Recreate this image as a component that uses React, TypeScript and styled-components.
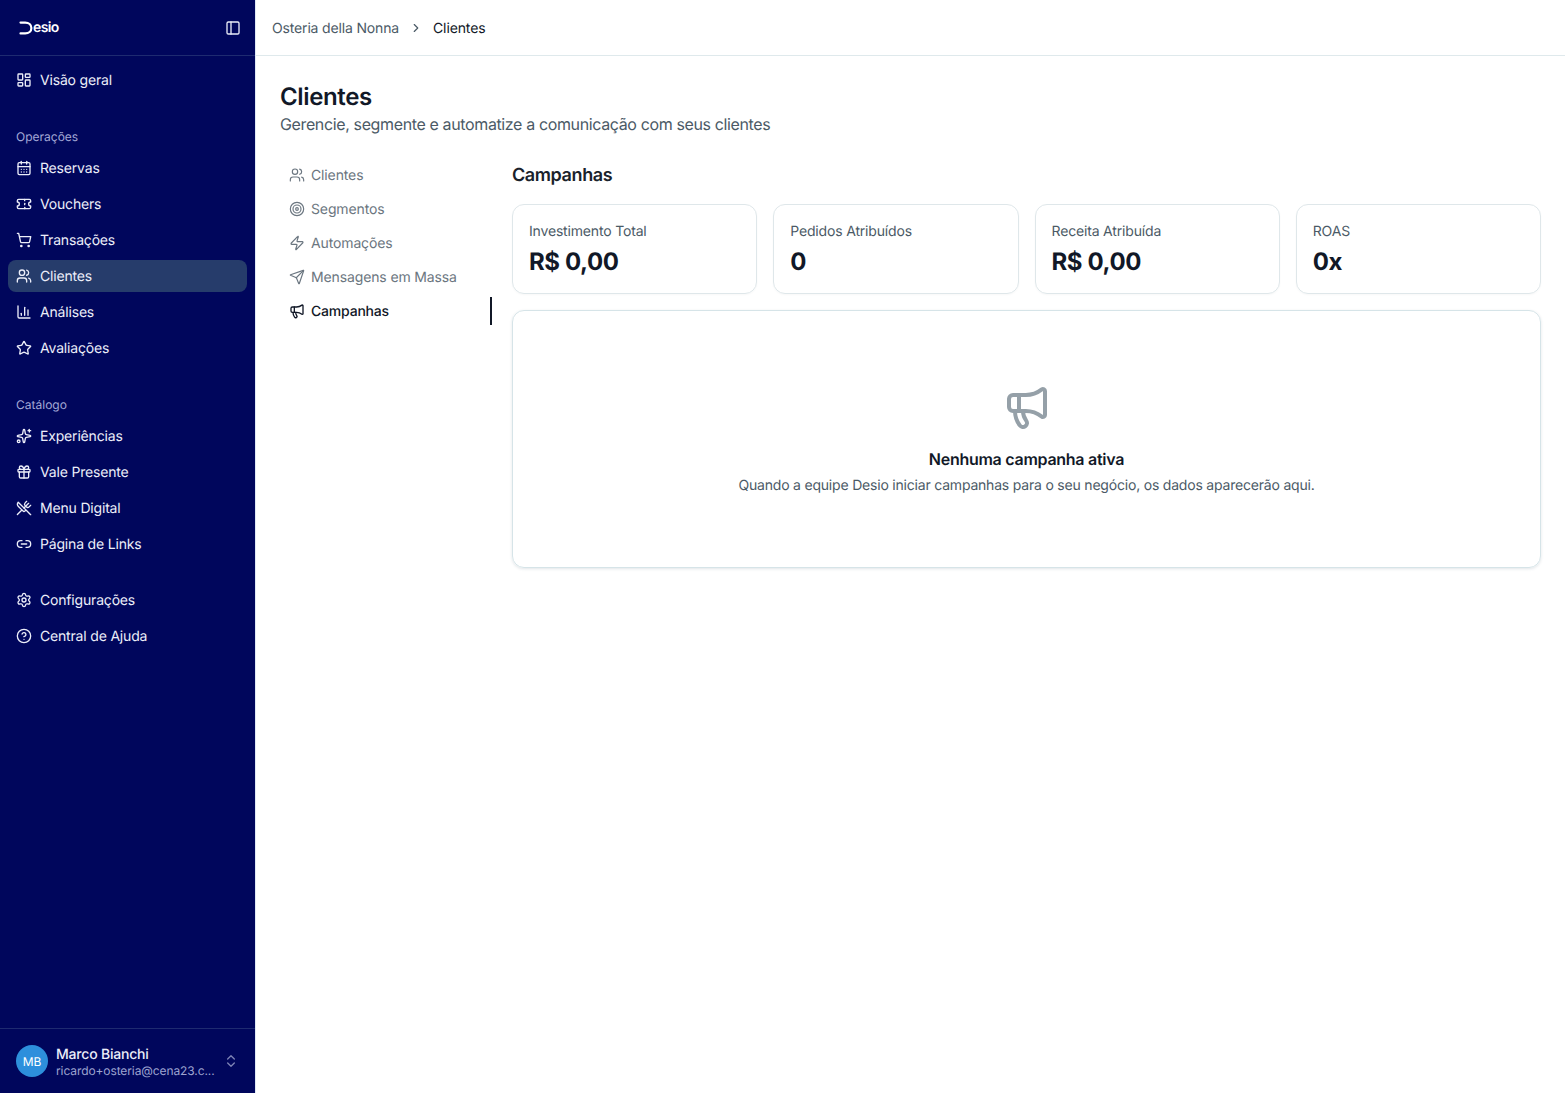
import React from 'react';
import styled, {createGlobalStyle} from 'styled-components';
import {
    CalendarDays, ChartColumn, ChevronRight, ChevronsUpDown, CircleHelp, Gift, LayoutDashboard, Link2,
    Megaphone, PanelLeft, Send, Settings, ShoppingCart, Sparkles, Star, Target, Ticket, Users,
    UtensilsCrossed, Zap,
} from 'lucide-react';

const GlobalStyle = createGlobalStyle`
    * {
        box-sizing: border-box;
    }

    html, body {
        margin: 0;
        height: 100%;
        background: #fff;
        font-family: Inter, "Liberation Sans", sans-serif;
        text-rendering: geometricPrecision;
        color: #111827;
    }
`

const operations = [
    {icon: CalendarDays, label: 'Reservas'},
    {icon: Ticket, label: 'Vouchers'},
    {icon: ShoppingCart, label: 'Transações'},
    {icon: Users, label: 'Clientes', active: true},
    {icon: ChartColumn, label: 'Análises'},
    {icon: Star, label: 'Avaliações'},
];

const catalog = [
    {icon: Sparkles, label: 'Experiências'},
    {icon: Gift, label: 'Vale Presente'},
    {icon: UtensilsCrossed, label: 'Menu Digital'},
    {icon: Link2, label: 'Página de Links'},
];

const support = [
    {icon: Settings, label: 'Configurações'},
    {icon: CircleHelp, label: 'Central de Ajuda'},
];

const tabs = [
    {icon: Users, label: 'Clientes'},
    {icon: Target, label: 'Segmentos'},
    {icon: Zap, label: 'Automações'},
    {icon: Send, label: 'Mensagens em Massa'},
    {icon: Megaphone, label: 'Campanhas', active: true},
];

const stats = [
    {label: 'Investimento Total', value: 'R$ 0,00'},
    {label: 'Pedidos Atribuídos', value: '0'},
    {label: 'Receita Atribuída', value: 'R$ 0,00'},
    {label: 'ROAS', value: '0x'},
];

type NavEntry = { icon: React.ElementType, label: string, active?: boolean };

const NavList = ({items}: { items: NavEntry[] }) => (
    <NavGroup>
        {items.map(({icon: Icon, label, active}) => (
            <NavItem key={label} $active={active}>
                <Icon size={16} strokeWidth={2}/>
                {label}
            </NavItem>
        ))}
    </NavGroup>
);

export default function App() {
    return (
        <Page>
            <GlobalStyle/>
            <Sidebar>
                <SidebarHeader>
                    <Logo>
                        <svg width="14" height="14" viewBox="0 0 14 14" fill="none">
                            <path d="M1.5 1.6H6.2C9.8 1.6 12.4 3.8 12.4 7C12.4 10.2 9.8 12.4 6.2 12.4H1.5" stroke="#fff" strokeWidth="2.2" strokeLinecap="round"/>
                        </svg>
                        <LogoText>esio</LogoText>
                    </Logo>
                    <PanelLeft size={16} color="#e8ebf7" strokeWidth={2}/>
                </SidebarHeader>
                <SidebarBody>
                    <NavList items={[{icon: LayoutDashboard, label: 'Visão geral'}]}/>
                    <Section>
                        <SectionLabel>Operações</SectionLabel>
                        <NavList items={operations}/>
                    </Section>
                    <Section>
                        <SectionLabel>Catálogo</SectionLabel>
                        <NavList items={catalog}/>
                    </Section>
                    <Section>
                        <NavList items={support}/>
                    </Section>
                </SidebarBody>
                <UserRow>
                    <Avatar>MB</Avatar>
                    <UserInfo>
                        <UserName>Marco Bianchi</UserName>
                        <UserEmail>ricardo+osteria@cena23.c...</UserEmail>
                    </UserInfo>
                    <ChevronsUpDown size={16} color="#7d83b5" strokeWidth={2}/>
                </UserRow>
            </Sidebar>
            <Main>
                <TopBar>
                    <Crumb>Osteria della Nonna</Crumb>
                    <ChevronRight size={14} color="#4b5a66" strokeWidth={2}/>
                    <CurrentCrumb>Clientes</CurrentCrumb>
                </TopBar>
                <Content>
                    <PageTitle>Clientes</PageTitle>
                    <PageSubtitle>Gerencie, segmente e automatize a comunicação com seus clientes</PageSubtitle>
                    <Columns>
                        <TabList>
                            {tabs.map(({icon: Icon, label, active}) => (
                                <Tab key={label} $active={active}>
                                    <Icon size={16} strokeWidth={active ? 2 : 1.75}/>
                                    {label}
                                </Tab>
                            ))}
                        </TabList>
                        <Panel>
                            <PanelTitle>Campanhas</PanelTitle>
                            <StatGrid>
                                {stats.map(stat => (
                                    <StatCard key={stat.label}>
                                        <StatLabel>{stat.label}</StatLabel>
                                        <StatValue>{stat.value}</StatValue>
                                    </StatCard>
                                ))}
                            </StatGrid>
                            <EmptyCard>
                                <Megaphone size={48} color="#95a0a8" strokeWidth={2}/>
                                <EmptyTitle>Nenhuma campanha ativa</EmptyTitle>
                                <EmptyText>Quando a equipe Desio iniciar campanhas para o seu negócio, os dados aparecerão aqui.</EmptyText>
                            </EmptyCard>
                        </Panel>
                    </Columns>
                </Content>
            </Main>
        </Page>
    );
}

const Page = styled.div`
    display: flex;
    height: 1093px;
    overflow: hidden;
`

const Sidebar = styled.aside`
    width: 256px;
    flex-shrink: 0;
    display: flex;
    flex-direction: column;
    background: #00065c;
    border-right: 1px solid #dfe9f5;
    color: #eceef9;
`

const SidebarHeader = styled.div`
    height: 56px;
    flex-shrink: 0;
    display: flex;
    align-items: center;
    justify-content: space-between;
    padding: 0 14px 0 19px;
    border-bottom: 1px solid #1e2a70;
`

const Logo = styled.div`
    display: flex;
    align-items: center;
`

const LogoText = styled.span`
    font-size: 14px;
    font-weight: 600;
    letter-spacing: -0.6px;
    color: #fff;
`

const SidebarBody = styled.div`
    flex: 1;
    padding: 8px 8px 0;
`

const NavGroup = styled.nav`
    display: flex;
    flex-direction: column;
    gap: 4px;
`

const NavItem = styled.a<{ $active?: boolean }>`
    height: 32px;
    display: flex;
    align-items: center;
    gap: 8px;
    padding: 0 8px;
    border-radius: 8px;
    font-size: 14px;
    letter-spacing: -0.18px;
    color: #eceef9;
    background: ${props => props.$active ? '#263c6b' : 'transparent'};
`

const Section = styled.section`
    margin-top: 24px;
`

const SectionLabel = styled.div`
    height: 32px;
    display: flex;
    align-items: center;
    padding: 0 8px;
    font-size: 12px;
    color: #a3a8d6;
`

const UserRow = styled.div`
    height: 65px;
    flex-shrink: 0;
    display: flex;
    align-items: center;
    gap: 8px;
    padding: 0 16px;
    border-top: 1px solid #1e2a70;
`

const Avatar = styled.div`
    width: 32px;
    height: 32px;
    flex-shrink: 0;
    border-radius: 50%;
    background: #2d8fdc;
    color: #fff;
    display: flex;
    align-items: center;
    justify-content: center;
    font-size: 12px;
`

const UserInfo = styled.div`
    flex: 1;
    min-width: 0;
    display: flex;
    flex-direction: column;
    padding-top: 1px;
`

const UserName = styled.div`
    font-size: 14px;
    line-height: 19px;
    font-weight: 500;
    letter-spacing: -0.2px;
    color: #eceef9;
`

const UserEmail = styled.div`
    font-size: 12px;
    line-height: 14px;
    letter-spacing: -0.1px;
    color: #9da3d0;
    white-space: nowrap;
`

const Main = styled.main`
    flex: 1;
    min-width: 0;
`

const TopBar = styled.header`
    height: 56px;
    display: flex;
    align-items: center;
    gap: 10px;
    padding: 1px 16px 0;
    border-bottom: 1px solid #dfe9ec;
`

const Crumb = styled.span`
    font-size: 14px;
    letter-spacing: -0.16px;
    color: #4b5a66;
`

const CurrentCrumb = styled.span`
    font-size: 14px;
    letter-spacing: -0.12px;
    color: #111827;
`

const Content = styled.div`
    padding: 26px 24px 0;
`

const PageTitle = styled.h1`
    margin: 0;
    font-size: 24px;
    line-height: 30px;
    font-weight: 600;
    letter-spacing: -0.37px;
    color: #111827;
`

const PageSubtitle = styled.p`
    margin: 0;
    font-size: 16px;
    line-height: 24px;
    letter-spacing: -0.37px;
    color: #4b5a66;
`

const Columns = styled.div`
    display: flex;
    gap: 20px;
    margin-top: 24px;
`

const TabList = styled.div`
    width: 212px;
    flex-shrink: 0;
    display: flex;
    flex-direction: column;
    gap: 6px;
    padding-top: 1px;
`

const Tab = styled.a<{ $active?: boolean }>`
    height: 28px;
    display: flex;
    align-items: center;
    gap: 6px;
    padding: 0 9px;
    font-size: 14px;
    letter-spacing: ${props => props.$active ? '-0.2px' : '-0.13px'};
    color: ${props => props.$active ? '#111827' : '#6b7680'};
    font-weight: ${props => props.$active ? 500 : 400};
    border-right: 2px solid ${props => props.$active ? '#111827' : 'transparent'};
`

const Panel = styled.div`
    flex: 1;
    min-width: 0;
`

const PanelTitle = styled.h2`
    margin: 2px 0 14px;
    font-size: 18px;
    line-height: 28px;
    font-weight: 600;
    letter-spacing: -0.4px;
    color: #1a222b;
`

const StatGrid = styled.div`
    display: grid;
    grid-template-columns: repeat(4, 1fr);
    gap: 16px;
`

const StatCard = styled.div`
    height: 90px;
    padding: 17px 16px 0;
    border: 1px solid #dfe7ea;
    border-radius: 12px;
    box-shadow: 0 1px 2px rgba(0, 0, 0, 0.03);
`

const StatLabel = styled.div`
    font-size: 14px;
    line-height: 20px;
    letter-spacing: -0.17px;
    color: #4b5a66;
`

const StatValue = styled.div`
    margin-top: 4px;
    font-size: 24px;
    line-height: 32px;
    font-weight: 700;
    letter-spacing: -0.4px;
    color: #111827;
`

const EmptyCard = styled.div`
    height: 258px;
    margin-top: 16px;
    display: flex;
    flex-direction: column;
    align-items: center;
    padding-top: 72px;
    border: 1px solid #d6e4e8;
    border-radius: 12px;
    box-shadow: 0 1px 3px rgba(40, 70, 90, 0.14);
`

const EmptyTitle = styled.h3`
    margin: 16px 0 0;
    font-size: 16px;
    line-height: 24px;
    font-weight: 600;
    letter-spacing: -0.27px;
    color: #111827;
`

const EmptyText = styled.p`
    margin: 5px 0 0;
    font-size: 14px;
    line-height: 20px;
    letter-spacing: -0.2px;
    color: #4b5a66;
`
